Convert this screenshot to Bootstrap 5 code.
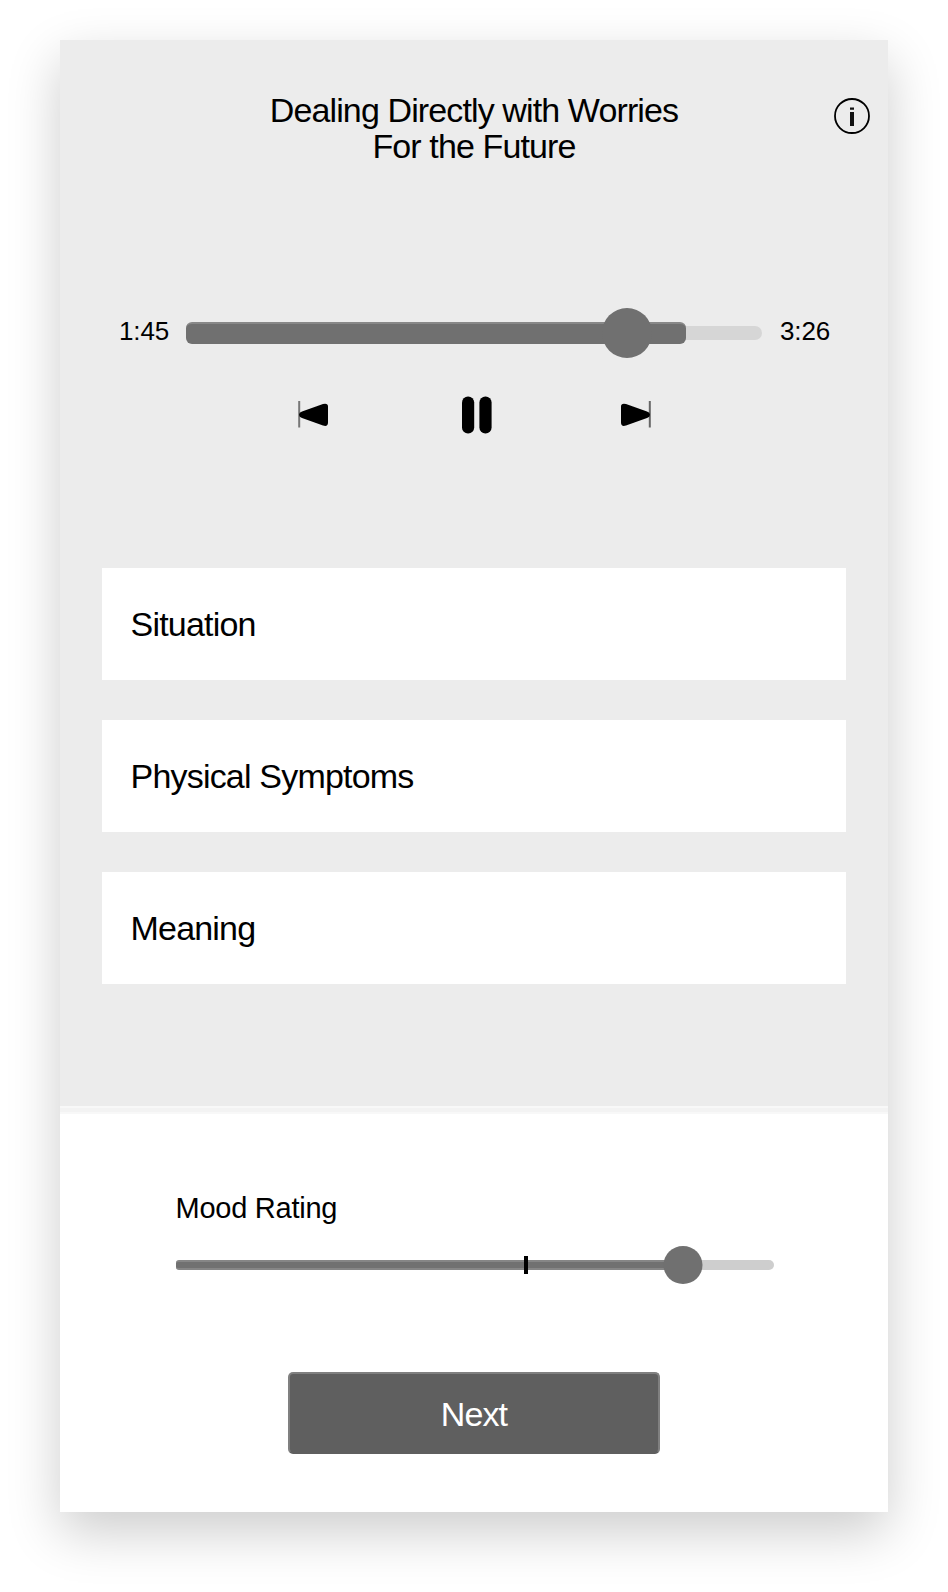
<!DOCTYPE html>
<html lang="en">
<head>
<meta charset="utf-8">
<meta name="viewport" content="width=device-width, initial-scale=1">
<title>Dealing Directly with Worries For the Future</title>
<link href="https://cdn.jsdelivr.net/npm/bootstrap@5.3.0/dist/css/bootstrap.min.css" rel="stylesheet">
<style>
body{background:#fff;color:#000;font-family:"Liberation Sans",Arial,sans-serif;padding:40px 60px;min-height:1592px}
.screen{width:828px;height:1472px;box-shadow:0 20px 50px rgba(0,0,0,.2)}
.upper{height:1066px;background:#ececec;padding:52px 42px 0}
.heading{display:grid;grid-template-columns:1fr auto 1fr;margin-right:-24px;margin-left:-24px}
.text-lg-ui{font-size:34px;line-height:36px;letter-spacing:-.88px;font-weight:400}
.info{margin-top:6px}
.player{margin-top:143px;height:52px;padding:0 16px 0 17px}
.time{width:50px;font-size:26px;line-height:30px;letter-spacing:-.15px;margin-top:-5px;white-space:nowrap}
.seek{height:14px;border-radius:7px;background:#d6d6d6;margin:0 18px 0 17px}
.seek-fill{top:-4px;left:0;height:22px;border-radius:6px;background:#707070;border-top:2px solid #888}
.knob{border-radius:50%;background:#707070;top:50%;transform:translate(-50%,-50%)}
.controls{height:38px;margin:37px 194.5px 0 194.5px}
.pause{margin-left:6px}
.fields{margin-top:134px;gap:40px}
.field{height:112px;padding-left:28.5px;background:#fff;letter-spacing:-.8px}
.divider{height:8px;background:#f3f3f3;border-top:2px solid #f8f8f8;border-bottom:2px solid #f8f8f8}
.lower{height:398px;background:#fff;padding:77px 114.5px 0 116px}
.mood-label{font-size:29px;line-height:34px;letter-spacing:-.25px;margin-left:-.5px}
.mood{height:10px;margin-top:35px;border-radius:5px;background:#cecece}
.mood-fill{top:0;left:0;height:10px;background:#717171;border:solid #868686;border-width:2px 0;border-radius:3px 0 0 3px}
.tick{top:-4px;width:4px;height:18px;background:#000}
.btn-next{width:372px;height:82px;margin:102px 0 0 112px;padding:2px 0 0;border:2px solid #808080;border-bottom-color:#5f5f5f;border-radius:5px;background:#5f5f5f;color:#fff}
</style>
</head>
<body>
<main class="screen">
  <section class="upper">
    <header class="heading">
      <span></span>
      <h1 class="text-lg-ui text-center mb-0">Dealing Directly with Worries<br>For the Future</h1>
      <svg class="info ms-auto" width="36" height="36" viewBox="0 0 36 36" aria-label="Information"><circle cx="18" cy="18" r="17" fill="none" stroke="#000" stroke-width="1.8"/><path d="M16 9.6h4v2.2h-4zM16 14h4V28h-4z" fill="#111"/></svg>
    </header>

    <div class="player d-flex align-items-center">
      <span class="time">1:45</span>
      <div class="seek flex-grow-1 position-relative">
        <div class="seek-fill position-absolute" style="width:86.8%"></div>
        <div class="knob position-absolute" style="left:76.5%;width:50px;height:50px"></div>
      </div>
      <span class="time">3:26</span>
    </div>

    <div class="controls d-flex justify-content-between align-items-center">
      <svg width="32" height="28" viewBox="0 0 32 28" aria-label="Previous"><path d="M2.2 0V26.5" stroke="#777" stroke-width="2"/><path d="M5 10.5 26 3.1Q31 2 31 5.5V21.5Q31 26 26 24.5L5 17Q2 16 2 13.7T5 10.5Z"/></svg>
      <svg class="pause" width="32" height="38" viewBox="0 0 32 38" aria-label="Pause"><rect x="1" y=".5" width="12.2" height="37" rx="6"/><rect x="18.4" y=".5" width="12.2" height="37" rx="6"/></svg>
      <svg width="32" height="28" viewBox="0 0 32 28" aria-label="Next track"><path d="M29.8 0V26.5" stroke="#666" stroke-width="2"/><path d="M27 10.5 6 3.1Q1 2 1 5.5V21.5Q1 26 6 24.5L27 17Q30 16 30 13.7T27 10.5Z"/></svg>
    </div>

    <div class="fields d-flex flex-column">
      <div class="field text-lg-ui d-flex align-items-center">Situation</div>
      <div class="field text-lg-ui d-flex align-items-center">Physical Symptoms</div>
      <div class="field text-lg-ui d-flex align-items-center">Meaning</div>
    </div>
  </section>
  <div class="divider"></div>
  <section class="lower">
    <div class="mood-label">Mood Rating</div>
    <div class="mood position-relative">
      <div class="mood-fill position-absolute" style="width:84.7%"></div>
      <div class="tick position-absolute" style="left:58.2%"></div>
      <div class="knob position-absolute" style="left:84.8%;width:39px;height:38px"></div>
    </div>
    <button type="button" class="btn btn-next text-lg-ui d-block">Next</button>
  </section>
</main>
<script src="https://cdn.jsdelivr.net/npm/bootstrap@5.3.0/dist/js/bootstrap.bundle.min.js"></script>
</body>
</html>
